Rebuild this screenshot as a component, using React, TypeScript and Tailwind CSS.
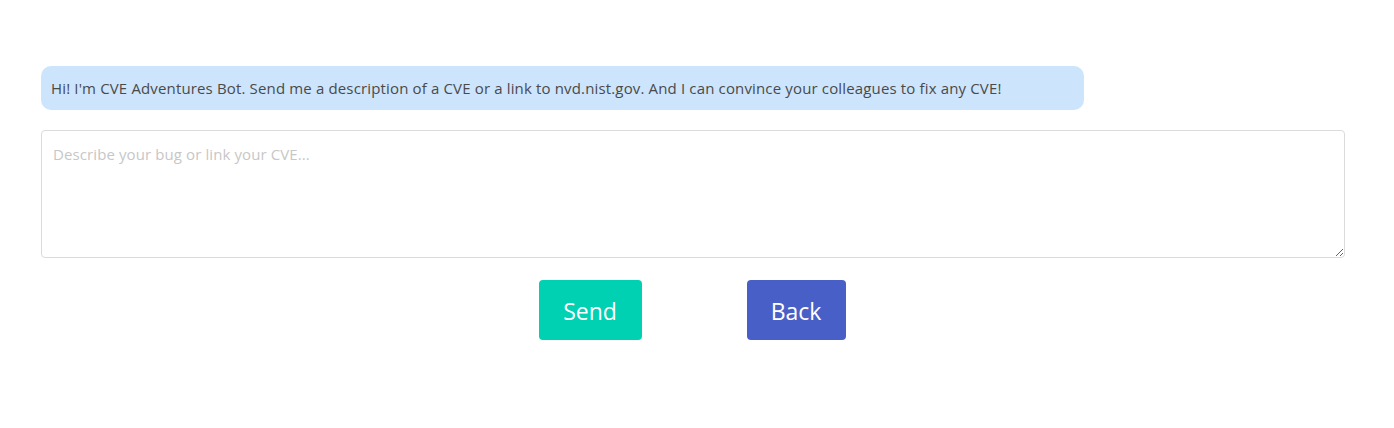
import React from "react";

export default function App() {
  return (
    <div className="w-[1394px] h-[428px] bg-white pt-[66px] pl-[41px] text-[#4a4a4a]" style={{ fontFamily: '"Open Sans", "Noto Sans", sans-serif' }}>
      <div className="w-[1304px]">
        <div className="flex">
          <div className="bg-[#cce5fc] rounded-[10px] h-[44px] flex items-center pl-[10px] w-[1043px] text-[15px] tracking-[0.15px]">
            Hi! I'm CVE Adventures Bot. Send me a description of a CVE or a link to nvd.nist.gov. And I can convince your colleagues to fix any CVE!
          </div>
        </div>
        <textarea
          className="mt-[20px] block w-[1304px] h-[128px] border border-[#dbdbdb] rounded-[4px] px-[11px] py-[12px] text-[15px] tracking-[0.1px] placeholder:text-[#c7c7c7] outline-none resize-y"
          placeholder="Describe your bug or link your CVE..."
        />
        <div className="flex justify-center gap-[105px] mt-[22px] w-[1302px]">
          <button className="bg-[#00d1b2] text-white rounded-[4px] h-[60px] w-[103px] text-[23px] pt-[2px]">Send</button>
          <button className="bg-[#485fc7] text-white rounded-[4px] h-[60px] w-[99px] text-[23px] pt-[2px]">Back</button>
        </div>
      </div>
    </div>
  );
}
